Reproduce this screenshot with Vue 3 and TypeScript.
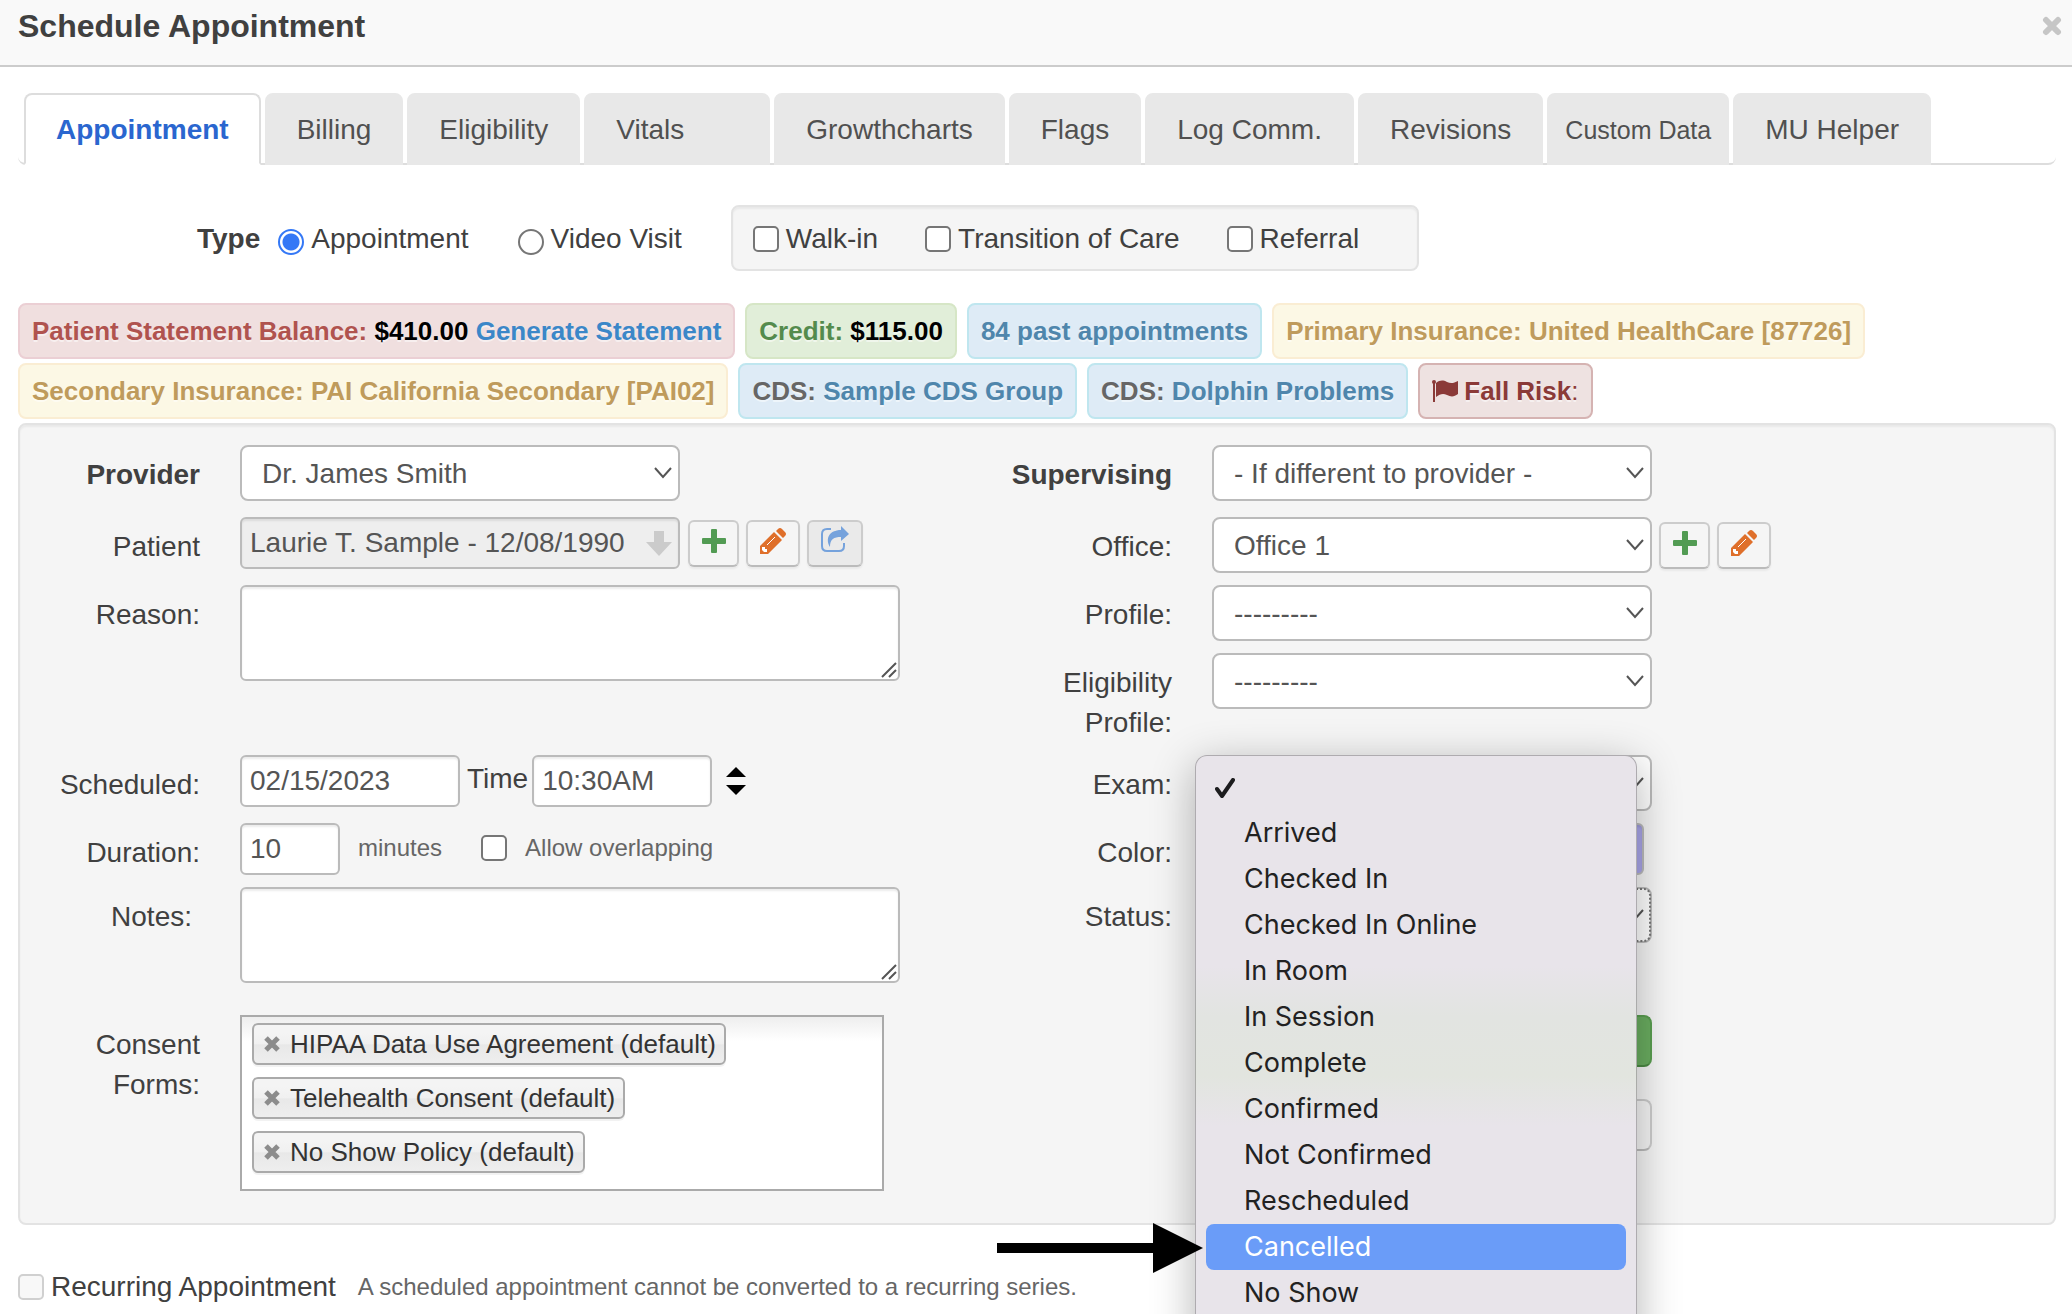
<script setup lang="ts">
import { ref } from 'vue'

interface Tab {
  name: string
  variant?: string
}

const tabs: Tab[] = [
  { name: 'Appointment', variant: 'active' },
  { name: 'Billing' },
  { name: 'Eligibility' },
  { name: 'Vitals', variant: 'wide' },
  { name: 'Growthcharts' },
  { name: 'Flags' },
  { name: 'Log Comm.' },
  { name: 'Revisions' },
  { name: 'Custom Data', variant: 'compact' },
  { name: 'MU Helper' },
]

const statuses: string[] = [
  'Arrived',
  'Checked In',
  'Checked In Online',
  'In Room',
  'In Session',
  'Complete',
  'Confirmed',
  'Not Confirmed',
  'Rescheduled',
  'Cancelled',
  'No Show',
]
const highlighted = ref('Cancelled')

const consentForms = ref<string[]>([
  'HIPAA Data Use Agreement (default)',
  'Telehealth Consent (default)',
  'No Show Policy (default)',
])

const visitType = ref('appointment')
const patient = ref('Laurie T. Sample - 12/08/1990')
const date = ref('02/15/2023')
const time = ref('10:30AM')
const duration = ref('10')

function removeForm(form: string) {
  consentForms.value = consentForms.value.filter((f) => f !== form)
}
</script>

<template>
  <div class="page">
    <header class="head">
      <h1>Schedule Appointment</h1>
      <button class="close" type="button">
        <svg width="20" height="20" viewBox="0 0 20 20"><path d="M4 4L16 16M16 4L4 16" stroke="#c6c6c6" stroke-width="6" stroke-linecap="round" /></svg>
      </button>
    </header>

    <main class="body">
      <nav>
        <ul class="tabs">
          <li v-for="tab in tabs" :key="tab.name">
            <a href="#" class="tab" :class="tab.variant">{{ tab.name }}</a>
          </li>
        </ul>
      </nav>

      <div class="type-row">
        <span class="type-label">Type</span>
        <label class="choice"><input v-model="visitType" type="radio" name="visit" value="appointment" />Appointment</label>
        <label class="choice"><input v-model="visitType" type="radio" name="visit" value="video" />Video Visit</label>
        <div class="flags-box">
          <label class="choice"><input type="checkbox" />Walk-in</label>
          <label class="choice"><input type="checkbox" />Transition of Care</label>
          <label class="choice"><input type="checkbox" />Referral</label>
        </div>
      </div>

      <div class="badges">
        <span class="badge danger">Patient Statement Balance: <b>$410.00</b> <a href="#">Generate Statement</a></span>
        <span class="badge success">Credit: <b>$115.00</b></span>
        <a href="#" class="badge info">84 past appointments</a>
        <span class="badge warning">Primary Insurance: United HealthCare [87726]</span>
        <span class="badge warning">Secondary Insurance: PAI California Secondary [PAI02]</span>
        <span class="badge info"><i>CDS:</i> Sample CDS Group</span>
        <span class="badge info"><i>CDS:</i> Dolphin Problems</span>
        <span class="badge risk">
          <svg width="26" height="24" viewBox="0 0 26 24" fill="#8b3a38"><circle cx="2" cy="3" r="2" /><path d="M1 3H3V23H1ZM4 4C8 1 11 1 15 3C19 5 22 4 26 2V15C22 18 19 18 15 16C11 14 8 15 4 18Z" /></svg>
          <span>Fall Risk<em>:</em></span>
        </span>
      </div>

      <form class="panel">
        <div class="field first">
          <label class="name strong" for="provider">Provider</label>
          <span class="select">
            <select id="provider"><option>Dr. James Smith</option></select>
            <svg width="18" height="12" viewBox="0 0 18 12"><path d="M1 1L9 10L17 1" /></svg>
          </span>
        </div>
        <div class="field first">
          <label class="name strong" for="supervising">Supervising</label>
          <span class="select">
            <select id="supervising"><option>- If different to provider -</option></select>
            <svg width="18" height="12" viewBox="0 0 18 12"><path d="M1 1L9 10L17 1" /></svg>
          </span>
        </div>

        <div class="field">
          <label class="name" for="patient">Patient</label>
          <div class="inline">
            <span class="patient">
              <input id="patient" v-model="patient" class="text locked" type="text" readonly />
              <svg width="26" height="26" viewBox="0 0 26 26" fill="#cbcbcb"><path d="M8 1H18V12H26L13 26L0 12H8Z" /></svg>
            </span>
            <button class="tool" type="button">
              <svg width="24" height="24" viewBox="0 0 24 24" fill="#529b53"><rect x="9" width="6" height="24" rx="1" /><rect y="9" width="24" height="6" rx="1" /></svg>
            </button>
            <button class="tool edit" type="button">
              <svg width="26" height="26" viewBox="0 0 26 26" fill="#df6f2a"><path d="M0 26V18L14 4L22 12L8 26ZM16 3L18 1Q20 -1 22 1L25 4Q27 6 25 8L23 10Z" /><path d="M2 19L5 19L5 21L7 21L7 24L4 24L2 22Z" fill="#fff" /><path d="M7 17L15 9" stroke="#fff" stroke-width="1" /></svg>
            </button>
            <button class="tool share" type="button">
              <svg width="28" height="26" viewBox="0 0 28 26" fill="none"><path d="M10 3H6Q1 3 1 8V20Q1 25 6 25H18Q23 25 23 20V17" stroke="#75a2dc" stroke-width="2" /><path d="M20 0L28 8L20 15V11C13 11 9 13 9 21C4 13 8 4 20 4Z" fill="#75a2dc" /></svg>
            </button>
          </div>
        </div>
        <div class="field">
          <label class="name" for="office">Office:</label>
          <div class="inline">
            <span class="select">
              <select id="office"><option>Office 1</option></select>
              <svg width="18" height="12" viewBox="0 0 18 12"><path d="M1 1L9 10L17 1" /></svg>
            </span>
            <button class="tool" type="button">
              <svg width="24" height="24" viewBox="0 0 24 24" fill="#529b53"><rect x="9" width="6" height="24" rx="1" /><rect y="9" width="24" height="6" rx="1" /></svg>
            </button>
            <button class="tool edit" type="button">
              <svg width="26" height="26" viewBox="0 0 26 26" fill="#df6f2a"><path d="M0 26V18L14 4L22 12L8 26ZM16 3L18 1Q20 -1 22 1L25 4Q27 6 25 8L23 10Z" /><path d="M2 19L5 19L5 21L7 21L7 24L4 24L2 22Z" fill="#fff" /><path d="M7 17L15 9" stroke="#fff" stroke-width="1" /></svg>
            </button>
          </div>
        </div>

        <div class="field double">
          <label class="name" for="reason">Reason:</label>
          <span class="area">
            <textarea id="reason"></textarea>
            <svg width="16" height="16" viewBox="0 0 16 16"><path d="M1 15L15 1M8 15L15 8" /></svg>
          </span>
        </div>
        <div class="field">
          <label class="name" for="profile">Profile:</label>
          <span class="select">
            <select id="profile"><option>---------</option></select>
            <svg width="18" height="12" viewBox="0 0 18 12"><path d="M1 1L9 10L17 1" /></svg>
          </span>
        </div>
        <div class="field">
          <label class="name" for="eligibility">Eligibility Profile:</label>
          <span class="select">
            <select id="eligibility"><option>---------</option></select>
            <svg width="18" height="12" viewBox="0 0 18 12"><path d="M1 1L9 10L17 1" /></svg>
          </span>
        </div>

        <div class="field">
          <label class="name" for="date">Scheduled:</label>
          <div class="inline">
            <input id="date" v-model="date" class="text date" type="text" />
            <label class="time-label" for="time">Time</label>
            <input id="time" v-model="time" class="text time" type="text" />
            <span class="spinner">
              <button type="button"><svg width="20" height="10" viewBox="0 0 20 10"><path d="M10 0L20 10H0Z" /></svg></button>
              <button type="button"><svg width="20" height="10" viewBox="0 0 20 10"><path d="M0 0H20L10 10Z" /></svg></button>
            </span>
          </div>
        </div>
        <div class="field">
          <label class="name" for="exam">Exam:</label>
          <span class="select">
            <select id="exam"></select>
            <svg width="18" height="12" viewBox="0 0 18 12"><path d="M1 1L9 10L17 1" /></svg>
          </span>
        </div>

        <div class="field">
          <label class="name" for="duration">Duration:</label>
          <div class="inline">
            <input id="duration" v-model="duration" class="text duration" type="text" />
            <span class="hint minutes">minutes</span>
            <label class="hint overlap"><input type="checkbox" />Allow overlapping</label>
          </div>
        </div>
        <div class="field">
          <label class="name" for="color">Color:</label>
          <input id="color" class="text color" type="text" />
        </div>

        <div class="field notes">
          <label class="name" for="notes">Notes:</label>
          <span class="area">
            <textarea id="notes"></textarea>
            <svg width="16" height="16" viewBox="0 0 16 16"><path d="M1 15L15 1M8 15L15 8" /></svg>
          </span>
        </div>
        <div class="field">
          <label class="name" for="status">Status:</label>
          <div class="select focused">
            <select id="status"></select>
            <svg width="18" height="12" viewBox="0 0 18 12"><path d="M1 1L9 10L17 1" /></svg>
            <ul class="menu" role="listbox">
              <li role="option" aria-selected="true">
                <svg width="20" height="20" viewBox="0 0 20 20"><path d="M2 11L7 18L18 2" /></svg>
              </li>
              <li v-for="status in statuses" :key="status" role="option" :class="{ on: status === highlighted }">{{ status }}</li>
            </ul>
            <svg class="pointer" width="206" height="50" viewBox="0 0 206 50"><path d="M0 20H156V0L206 25L156 50V30H0Z" /></svg>
          </div>
        </div>

        <div class="field">
          <label class="name" for="consent">Consent Forms:</label>
          <ul id="consent" class="consent">
            <li v-for="form in consentForms" :key="form">
              <button type="button" @click="removeForm(form)">
                <svg width="16" height="18" viewBox="0 0 16 18"><path d="M2 3L14 15M14 3L2 15" stroke="#8c8c8c" stroke-width="5" /></svg>
              </button>
              {{ form }}
            </li>
          </ul>
        </div>
        <div class="field">
          <span class="name"></span>
          <div class="actions">
            <button class="big go" type="button"></button>
            <button class="big" type="button"></button>
          </div>
        </div>
      </form>

      <div class="recurring">
        <label class="choice"><input type="checkbox" disabled />Recurring Appointment</label>
        <span class="hint">A scheduled appointment cannot be converted to a recurring series.</span>
      </div>
    </main>
  </div>
</template>

<style>
html,
body {
  margin: 0;
  background: #fff;
}
</style>

<style scoped>
.page {
  height: 100vh;
  overflow: hidden;
  font-family: "Liberation Sans", Arial, sans-serif;
  font-size: 28px;
  line-height: 40px;
  color: #404040;
}
.page * {
  box-sizing: border-box;
}
button,
input,
select,
textarea {
  margin: 0;
  font: inherit;
  color: #555;
}
svg {
  display: block;
  flex: none;
}
ul {
  margin: 0;
  padding: 0;
  list-style: none;
}
.head {
  display: flex;
  justify-content: space-between;
  padding: 6px 10px 19px 18px;
  background: #f9f9f9;
  border-bottom: 2px solid #ccc;
}
h1 {
  margin: 0;
  font-size: 32px;
  line-height: 40px;
}
.close {
  padding: 0;
  border: 0;
  background: none;
}
.body {
  padding: 26px 16px 0 18px;
}

.tabs {
  display: flex;
  gap: 4px;
  height: 72px;
  padding-left: 6px;
  border-bottom: 2px solid #ddd;
  border-radius: 0 0 8px 8px;
}
.tab {
  display: block;
  height: 72px;
  padding: 0 30px;
  border: 2px solid #e8e8e8;
  border-radius: 8px 8px 0 0;
  background: #e8e8e8;
  line-height: 70px;
  color: #505050;
  text-decoration: none;
  white-space: nowrap;
}
.tab.active {
  border-color: #ddd #ddd #fff;
  background: #fff;
  color: #2a66cf;
  font-weight: bold;
}
.tab.wide {
  padding-right: 84px;
}
.tab.compact {
  padding: 0 16px;
  font-size: 25px;
}

.type-row {
  display: flex;
  align-items: center;
  margin-top: 40px;
  padding-left: 179px;
}
.type-label {
  margin-right: 18px;
  padding-top: 2px;
  font-weight: bold;
}
.choice {
  display: flex;
  align-items: center;
  gap: 7px;
  white-space: nowrap;
}
.type-row .choice {
  padding-top: 2px;
}
.type-row > .choice {
  margin-right: 49px;
}
input[type="checkbox"],
input[type="radio"] {
  flex: none;
  appearance: none;
  width: 26px;
  height: 26px;
  border: 2px solid #767676;
  border-radius: 5px;
  background: #fff;
}
input[type="radio"] {
  margin-top: 6px;
  border-radius: 50%;
}
input[type="radio"]:checked {
  border-color: #3478f6;
  background: radial-gradient(circle, #3478f6 8px, #fff 9px);
}
input[type="checkbox"]:disabled {
  border-color: #d0d0d0;
  background: #f8f8f8;
}
.flags-box {
  display: flex;
  align-items: center;
  gap: 47px;
  height: 66px;
  padding: 0 58px 0 20px;
  border: 2px solid #e3e3e3;
  border-radius: 8px;
  background: #f5f5f5;
  box-shadow: inset 0 2px 2px rgba(0, 0, 0, 0.05);
}

.badges {
  display: flex;
  flex-wrap: wrap;
  gap: 4px 10px;
  margin-top: 32px;
}
.badge {
  display: block;
  height: 56px;
  padding: 0 12px;
  border: 2px solid;
  border-radius: 8px;
  font-size: 26px;
  font-weight: bold;
  line-height: 52px;
  text-decoration: none;
  text-shadow: 0 2px 0 rgba(255, 255, 255, 0.5);
  white-space: nowrap;
}
.badge b {
  color: #000;
}
.badge a {
  color: #3b87c8;
  text-decoration: none;
}
.badge i {
  font-style: normal;
  color: #666;
}
.badge em {
  font-style: normal;
  font-weight: normal;
}
.danger {
  border-color: #ebcfd4;
  background: #f0dfdf;
  color: #b0534f;
}
.success {
  border-color: #d6e6c6;
  background: #e1eed9;
  color: #548b4d;
}
.info {
  border-color: #bfe6ef;
  background: #deebf6;
  color: #4f86ac;
}
.warning {
  border-color: #faedd3;
  background: #fcf8e5;
  color: #bf9b5c;
}
.risk {
  display: flex;
  align-items: center;
  gap: 6px;
  border-color: #d5b3b2;
  background: #eee2e1;
  color: #8b3a38;
}

.panel {
  display: grid;
  grid-template-columns: 972fr 1062fr;
  row-gap: 12px;
  margin-top: 4px;
  padding: 20px 0 32px;
  border: 2px solid #e3e3e3;
  border-radius: 8px;
  background: #f5f5f5;
  box-shadow: inset 0 2px 2px rgba(0, 0, 0, 0.05);
}
.field {
  display: flex;
  align-items: flex-start;
  gap: 40px;
}
.first {
  padding-bottom: 4px;
}
.double {
  grid-row: span 2;
}
.name {
  flex: none;
  width: 180px;
  padding-top: 10px;
  text-align: right;
}
.strong {
  font-weight: bold;
}
.inline {
  display: flex;
  align-items: center;
}
.select {
  position: relative;
  width: 440px;
  height: 56px;
}
.select select {
  display: block;
  appearance: none;
  width: 100%;
  height: 56px;
  padding: 2px 40px 0 20px;
  border: 2px solid #bbb;
  border-radius: 8px;
  background: #fff;
}
.select > svg:not(.pointer) {
  position: absolute;
  top: 22px;
  right: 8px;
  fill: none;
  stroke: #555;
  stroke-width: 2;
  pointer-events: none;
}
.focused select {
  outline: 2px dotted #777;
  outline-offset: -3px;
}
.text,
textarea {
  display: block;
  height: 52px;
  padding: 0 8px;
  border: 2px solid #bbb;
  border-radius: 6px;
  background: #fff;
  box-shadow: inset 0 2px 2px rgba(0, 0, 0, 0.08);
}
.area {
  position: relative;
}
.area svg {
  position: absolute;
  right: 3px;
  bottom: 3px;
  fill: none;
  stroke: #555;
  stroke-width: 2;
  pointer-events: none;
}
textarea {
  width: 660px;
  height: 96px;
  resize: none;
}
.patient {
  position: relative;
  margin-right: 8px;
}
.patient svg {
  position: absolute;
  top: 13px;
  right: 8px;
}
.locked {
  width: 440px;
  background: #eee;
}
.tool {
  display: flex;
  align-items: center;
  justify-content: center;
  width: 51px;
  height: 47px;
  padding: 0 0 5px;
  border: 2px solid #ccc;
  border-bottom-color: #bbb;
  border-radius: 6px;
  background: #f5f5f5;
  box-shadow: 0 2px 2px rgba(0, 0, 0, 0.05);
}
.edit {
  width: 54px;
  margin: 0 7px;
}
.share {
  width: 56px;
  padding-bottom: 9px;
  background: #eaeaea;
}
.select + .tool {
  margin-left: 7px;
}
.date {
  width: 220px;
  margin-right: 7px;
}
.time-label {
  padding-bottom: 4px;
}
.time {
  width: 180px;
  margin: 0 14px 0 4px;
}
.spinner {
  display: flex;
  flex-direction: column;
  gap: 8px;
}
.spinner button {
  padding: 0;
  border: 0;
  background: none;
}
.duration {
  width: 100px;
}
.hint {
  font-size: 24px;
  color: #666;
}
.minutes {
  margin: 0 39px 0 18px;
}
.inline .hint {
  padding-bottom: 2px;
}
.overlap {
  display: flex;
  align-items: center;
  gap: 18px;
}
.color {
  width: 432px;
  background: #aba7ea;
}
.notes {
  min-height: 116px;
}
.notes .name {
  padding-right: 8px;
}
.menu {
  position: absolute;
  z-index: 1;
  top: -132px;
  left: -17px;
  width: 442px;
  height: 600px;
  padding: 8px 10px;
  border: 1px solid rgba(0, 0, 0, 0.25);
  border-radius: 12px;
  background: linear-gradient(#e8e4ea 210px, #e2e4e1 260px, #e2e5df 320px, #e8e4ea 370px);
  box-shadow: 0 10px 44px rgba(0, 0, 0, 0.3);
  font-family: Inter, sans-serif;
  font-size: 27px;
  color: #222;
}
.menu li {
  height: 46px;
  padding-left: 38px;
  border-radius: 8px;
  line-height: 46px;
}
.menu li:first-child {
  padding: 14px 0 0 9px;
}
.menu svg {
  fill: none;
  stroke: #1c1c1e;
  stroke-width: 4;
  stroke-linecap: round;
  stroke-linejoin: round;
}
.menu .on {
  background: #6a9cf8;
  color: #fff;
}
.pointer {
  position: absolute;
  z-index: 2;
  top: 336px;
  left: -215px;
}
.consent {
  display: flex;
  flex-direction: column;
  align-items: flex-start;
  gap: 12px;
  width: 644px;
  height: 176px;
  padding: 6px 10px;
  border: 2px solid #aaa;
  background: linear-gradient(#eee, #fff 24px);
}
.consent li {
  display: flex;
  align-items: center;
  gap: 10px;
  height: 42px;
  padding: 0 8px 0 10px;
  border: 2px solid #aaa;
  border-radius: 6px;
  background: linear-gradient(#f4f4f4 20%, #f0f0f0 50%, #e8e8e8 52%, #eee);
  box-shadow: 0 2px 0 rgba(0, 0, 0, 0.05);
  font-size: 26px;
  color: #333;
}
.consent button {
  padding: 0;
  border: 0;
  background: none;
}
.actions {
  display: flex;
  flex-direction: column;
  gap: 32px;
}
.big {
  width: 440px;
  height: 52px;
  border: 2px solid #ccc;
  border-bottom-color: #bbb;
  border-radius: 8px;
  background: #f5f5f5;
}
.go {
  border-color: #5a9e50 #5a9e50 #4c8a44;
  background: #6aad60;
}
.recurring {
  display: flex;
  align-items: center;
  gap: 22px;
  margin-top: 42px;
}
</style>
